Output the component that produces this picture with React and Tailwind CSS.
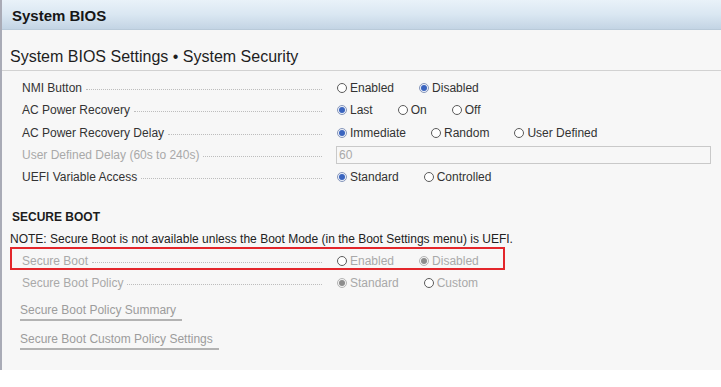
import React from "react";

// --- small radio bullet, drawn with css circles ---
const Radio = ({ label, checked = false, disabled = false }) => {
  const ring = checked
    ? disabled
      ? "border-[#b4b4b4] bg-[#f4f4f4]"
      : "border-[#8797bb] bg-[#eef2fa]"
    : "border-[#5b5b5b] bg-white";
  return (
    <span className="flex items-center gap-[3px]">
      <span className={`w-[10px] h-[10px] rounded-full border flex items-center justify-center ${ring}`}>
        {checked && (
          <span className={`w-[6px] h-[6px] rounded-full ${disabled ? "bg-[#8c8c8c]" : "bg-[#3a64bf]"}`} />
        )}
      </span>
      <span className={disabled ? "text-[#a9a9a9]" : "text-[#333]"}>{label}</span>
    </span>
  );
};

const Row = ({ label, disabled = false, height = "h-[22px]", children, outlined = false }) => (
  <div className={`relative flex items-center ${height}`}>
    {outlined && (
      <div className="absolute left-[-12px] top-[-3px] w-[495px] h-[23px] border-2 border-[#e3262b] pointer-events-none" />
    )}
    <div className="w-[300px] flex items-center">
      <span className={disabled ? "text-[#a9a9a9]" : "text-[#333]"}>{label}</span>
      <span className="flex-1 ml-[4px] mt-[3px] border-t border-dotted border-[#bdbdbd]" />
    </div>
    <div className="ml-[15px] flex-1 flex items-center gap-[25px]">{children}</div>
  </div>
);

const LinkItem = ({ children }) => (
  <div>
    <span className="inline-block leading-[17px] pr-[6px] border-b-2 border-[#b3b3b3] text-[#9c9c9c]">
      {children}
    </span>
  </div>
);

export default function App() {
  return (
    <div className="w-[721px] h-[387px] bg-white font-['Liberation_Sans',Arial,sans-serif] text-[12px]">
      <div className="h-[370px] border-l-2 border-[#a9abb6] bg-[#f7f7f7] flex flex-col">
        {/* Header */}
        <div className="h-[30px] pl-[10px] pt-[2px] leading-[28px] bg-linear-to-b from-[#e9f2f9] via-[#dae7f2] to-[#c3d4e4] border-b border-[#b9cad9]">
          <span className="text-[15px] font-bold text-[#161616]">System BIOS</span>
        </div>

        {/* Title */}
        <div className="pl-[8px] pt-[17px] pb-[3px] leading-[20px] text-[16px] text-[#1e1e1e] border-b border-[#d2d2d2]">
          System BIOS Settings • System Security
        </div>

        {/* Settings rows */}
        <div className="pl-[20px] pr-[10px] pt-[6px] leading-[22px]">
          <Row label="NMI Button">
            <Radio label="Enabled" />
            <Radio label="Disabled" checked />
          </Row>
          <Row label="AC Power Recovery">
            <Radio label="Last" checked />
            <Radio label="On" />
            <Radio label="Off" />
          </Row>
          <Row label="AC Power Recovery Delay" height="h-[23px]">
            <Radio label="Immediate" checked />
            <Radio label="Random" />
            <Radio label="User Defined" />
          </Row>
          <Row label="User Defined Delay (60s to 240s)" disabled>
            <div className="-ml-[1px] flex-1 h-[18px] border border-[#c9c9c9] pl-[2px] leading-[16px] text-[#a9a9a9]">
              60
            </div>
          </Row>
          <Row label="UEFI Variable Access">
            <Radio label="Standard" checked />
            <Radio label="Controlled" />
          </Row>
        </div>

        {/* Secure boot */}
        <div className="mt-[18px] leading-[22px]">
          <div className="pl-[10px] font-bold text-[#1c1c1c]">SECURE BOOT</div>
          <div className="pl-[8px] text-[#222]">
            NOTE: Secure Boot is not available unless the Boot Mode (in the Boot Settings menu) is UEFI.
          </div>
          <div className="pl-[20px] pr-[10px]">
            <Row label="Secure Boot" disabled outlined>
              <Radio label="Enabled" disabled />
              <Radio label="Disabled" checked disabled />
            </Row>
            <Row label="Secure Boot Policy" disabled>
              <Radio label="Standard" checked disabled />
              <Radio label="Custom" disabled />
            </Row>
          </div>
        </div>

        {/* Links */}
        <div className="pl-[18px] mt-[7px] flex flex-col gap-[9px]">
          <LinkItem>Secure Boot Policy Summary</LinkItem>
          <LinkItem>Secure Boot Custom Policy Settings</LinkItem>
        </div>
      </div>
    </div>
  );
}
